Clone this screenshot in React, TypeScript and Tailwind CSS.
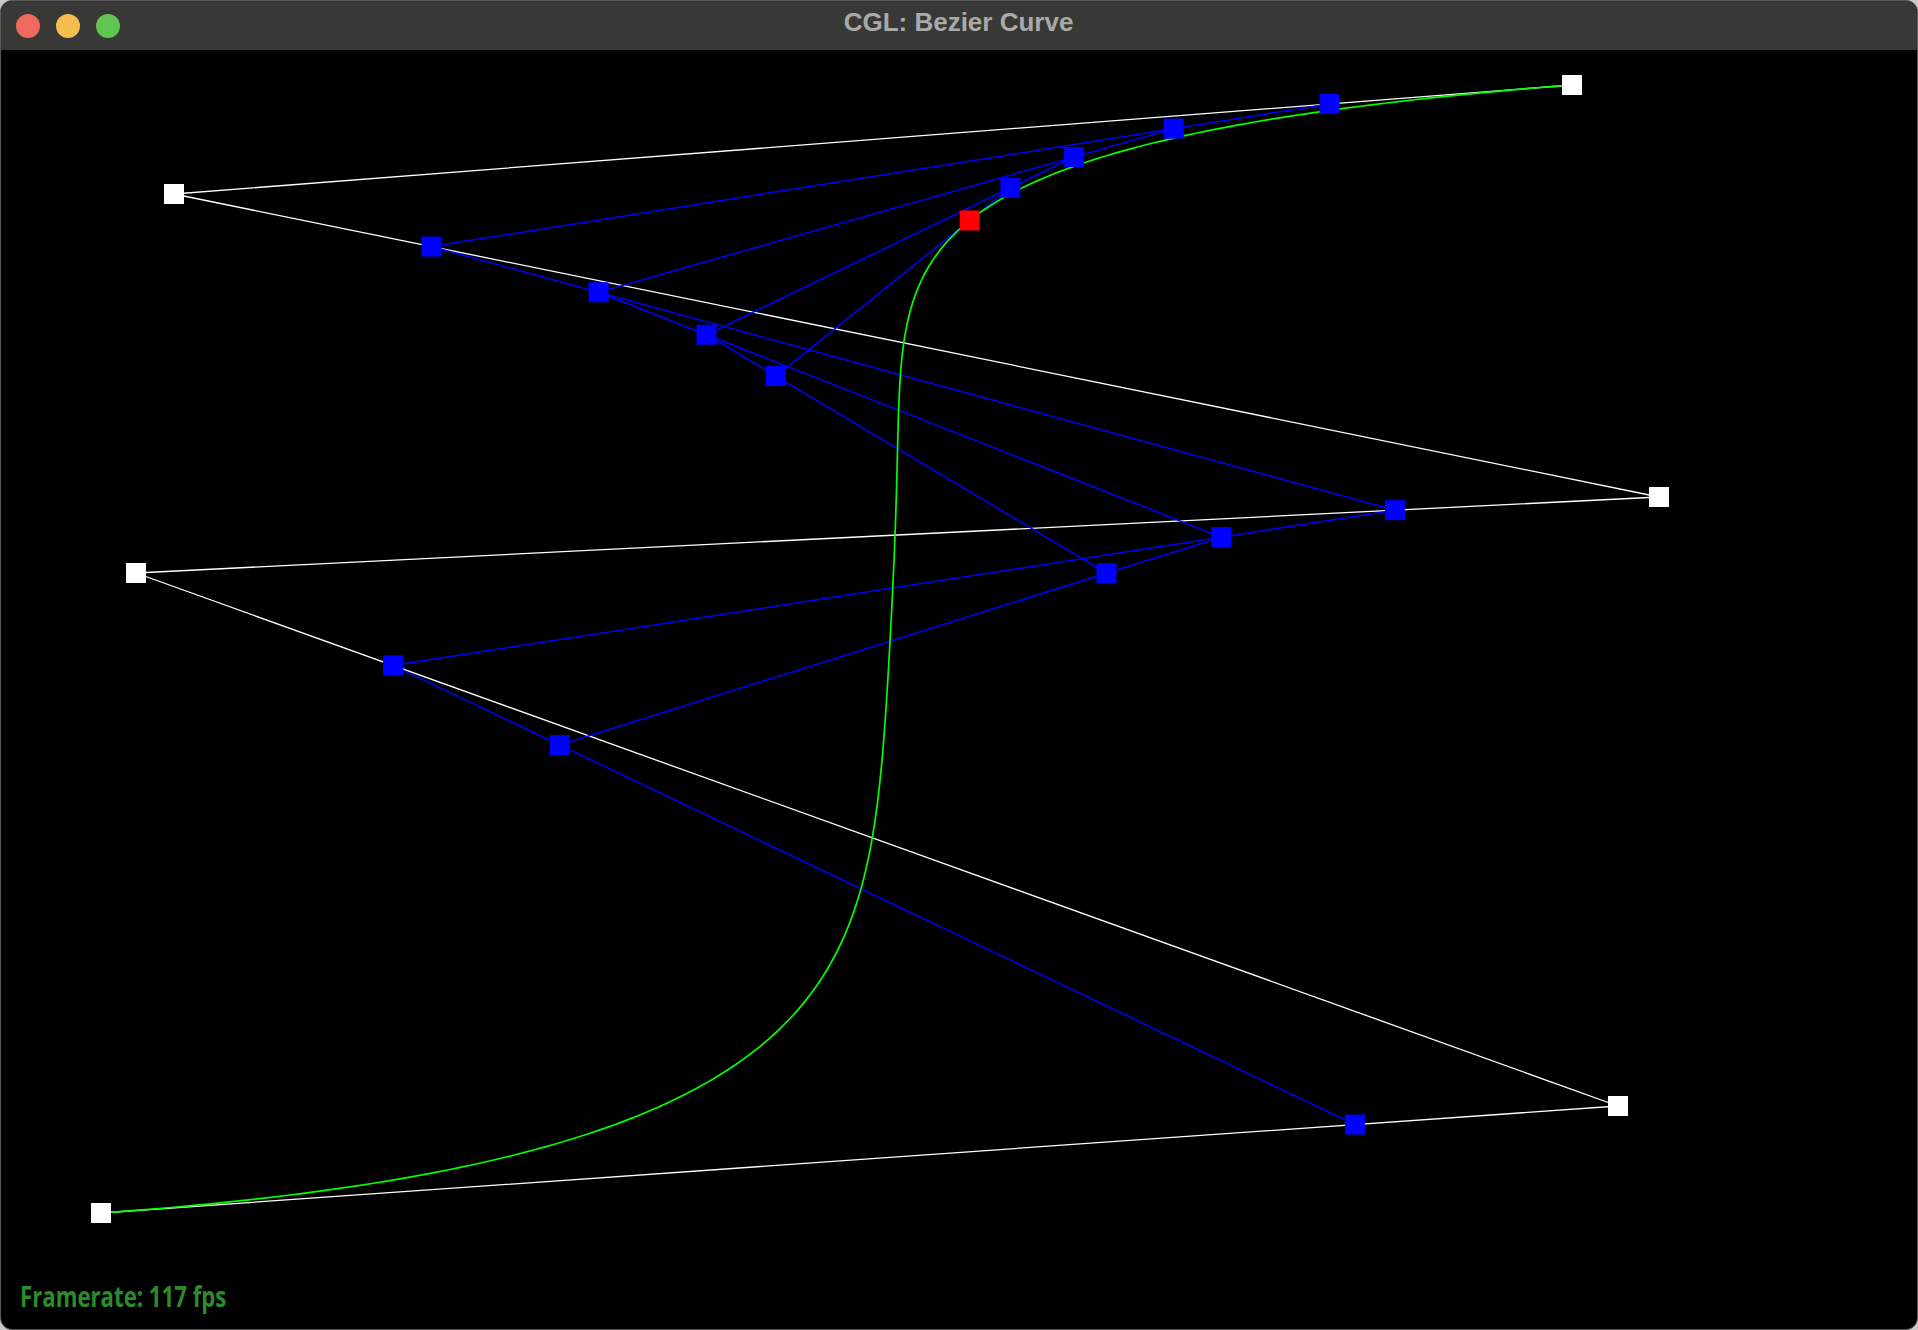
import React from "react";

type P = [number, number];

const CTRL: P[] = [
  [101, 1213],
  [1618, 1106],
  [136, 573],
  [1659, 497],
  [174, 194],
  [1572, 85],
];
const T = 0.8266;

function lerp(a: P, b: P, t: number): P {
  return [a[0] + (b[0] - a[0]) * t, a[1] + (b[1] - a[1]) * t];
}

function levels(pts: P[], t: number): P[][] {
  const out: P[][] = [pts];
  let cur = pts;
  while (cur.length > 1) {
    const next: P[] = [];
    for (let i = 0; i < cur.length - 1; i++) next.push(lerp(cur[i], cur[i + 1], t));
    out.push(next);
    cur = next;
  }
  return out;
}

function evalBez(pts: P[], t: number): P {
  const l = levels(pts, t);
  return l[l.length - 1][0];
}

function poly(pts: P[]) {
  return pts.map((p) => `${p[0].toFixed(2)},${p[1].toFixed(2)}`).join(" ");
}

export default function App() {
  const lv = levels(CTRL, T);
  const curve: P[] = [];
  for (let i = 0; i <= 400; i++) curve.push(evalBez(CTRL, i / 400));
  const inner = lv.slice(1, lv.length - 1);
  const red = lv[lv.length - 1][0];

  return (
    <div className="w-[1918px] h-[1330px] bg-[#c9c9c9] overflow-hidden">
      <div className="w-full h-full rounded-[12px] border border-[#5a5a5a] bg-black overflow-hidden flex flex-col">
        <div className="h-[49px] bg-[#383836] flex items-center relative shrink-0">
          <div className="flex items-center gap-[16px] pl-[15px]">
            <div className="w-[24px] h-[24px] rounded-full bg-[#ee6a5f]" />
            <div className="w-[24px] h-[24px] rounded-full bg-[#f5bf4f]" />
            <div className="w-[24px] h-[24px] rounded-full bg-[#61c554]" />
          </div>
          <div
            className="absolute left-0 right-0 top-0 bottom-0 flex items-center justify-center pr-[2px] pb-[6px] text-[#a9a9a8] text-[26px] font-bold pointer-events-none"
            style={{ fontFamily: '"Liberation Sans", Arial, sans-serif' }}
          >
            <span className="pl-[1px]">CGL: Bezier Curve</span>
          </div>
        </div>
        <div className="relative flex-1">
          <svg
            className="block"
            width={1916}
            height={1279}
            viewBox="1 50 1916 1279"
          >
            <polyline
              points={poly(CTRL)}
              fill="none"
              stroke="#ffffff"
              strokeWidth={1.3}
            />
            {inner.map((l, i) => (
              <polyline
                key={i}
                points={poly(l)}
                fill="none"
                stroke="#0000ff"
                strokeWidth={1.5}
              />
            ))}
            <polyline
              points={poly(curve)}
              fill="none"
              stroke="#00ff00"
              strokeWidth={1.7}
            />
            {CTRL.map((p, i) => (
              <rect key={"c" + i} x={p[0] - 10} y={p[1] - 10} width={20} height={20} fill="#ffffff" />
            ))}
            {inner.map((l, i) =>
              l.map((p, j) => (
                <rect key={`b${i}-${j}`} x={p[0] - 10} y={p[1] - 10} width={20} height={20} fill="#0000ff" />
              ))
            )}
            <rect x={red[0] - 10} y={red[1] - 10} width={20} height={20} fill="#ff0000" />
          </svg>
          <div
            className="absolute left-[19px] bottom-[19px] text-[#2c8c2c] text-[29px] font-bold leading-none origin-left scale-x-[0.765] whitespace-nowrap"
            style={{ fontFamily: '"Open Sans", sans-serif' }}
          >
            Framerate: 117 fps
          </div>
        </div>
      </div>
    </div>
  );
}
